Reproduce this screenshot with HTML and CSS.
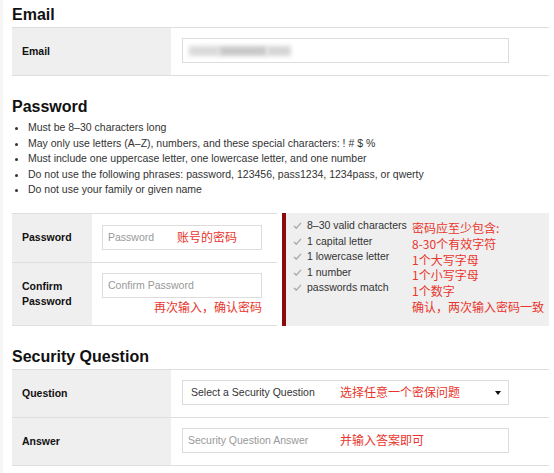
FILE: index.html
```
<!DOCTYPE html>
<html lang="zh-CN">
<head>
  <meta charset="UTF-8">
  <meta name="viewport" content="width=device-width, initial-scale=1.0">
  <title>Account | Email, Password &amp; Security</title>
  <link rel="stylesheet" href="styles.css">
</head>
<body>
  <div class="page">
    <section class="section">
      <h2>Email</h2>
      <div class="form-table">
        <div class="row">
          <div class="label">Email</div>
          <div class="field">
            <div class="input blurred">
              <span class="blur b1"></span><span class="blur b2"></span><span class="blur b3"></span>
            </div>
          </div>
        </div>
      </div>
    </section>

    <section class="section">
      <h2>Password</h2>
      <ul class="rules">
        <li>Must be 8&ndash;30 characters long</li>
        <li>May only use letters (A&ndash;Z), numbers, and these special characters: ! # $ %</li>
        <li>Must include one uppercase letter, one lowercase letter, and one number</li>
        <li>Do not use the following phrases: password, 123456, pass1234, 1234pass, or qwerty</li>
        <li>Do not use your family or given name</li>
      </ul>

      <div class="pw-wrap">
        <div class="form-table narrow">
          <div class="row">
            <div class="label">Password</div>
            <div class="field">
              <div class="box">
                <input type="password" class="input" placeholder="Password">
                <span class="note in-field">账号的密码</span>
              </div>
            </div>
          </div>
          <div class="row">
            <div class="label">Confirm<br>Password</div>
            <div class="field tall">
              <input type="password" class="input" placeholder="Confirm Password">
              <div class="note below">再次输入，确认密码</div>
            </div>
          </div>
        </div>

        <div class="checks">
          <ul class="check-list">
            <li><svg class="tick" viewBox="0 0 10 8"><polyline points="1,4.5 3.6,7 9,1"/></svg>8&ndash;30 valid characters</li>
            <li><svg class="tick" viewBox="0 0 10 8"><polyline points="1,4.5 3.6,7 9,1"/></svg>1 capital letter</li>
            <li><svg class="tick" viewBox="0 0 10 8"><polyline points="1,4.5 3.6,7 9,1"/></svg>1 lowercase letter</li>
            <li><svg class="tick" viewBox="0 0 10 8"><polyline points="1,4.5 3.6,7 9,1"/></svg>1 number</li>
            <li><svg class="tick" viewBox="0 0 10 8"><polyline points="1,4.5 3.6,7 9,1"/></svg>passwords match</li>
          </ul>
          <div class="note notes">
            <div>密码应至少包含:</div>
            <div>8-30个有效字符</div>
            <div>1个大写字母</div>
            <div>1个小写字母</div>
            <div>1个数字</div>
            <div>确认，两次输入密码一致</div>
          </div>
        </div>
      </div>
    </section>

    <section class="section">
      <h2>Security Question</h2>
      <div class="form-table">
        <div class="row">
          <div class="label">Question</div>
          <div class="field">
            <div class="box select-box">
              <select class="input select">
                <option>Select a Security Question</option>
              </select>
              <span class="note in-select">选择任意一个密保问题</span>
            </div>
          </div>
        </div>
        <div class="row">
          <div class="label">Answer</div>
          <div class="field">
            <div class="box">
              <input type="text" class="input" placeholder="Security Question Answer">
              <span class="note in-select">并输入答案即可</span>
            </div>
          </div>
        </div>
      </div>
    </section>
  </div>
</body>
</html>
```

FILE: styles.css
```
body {
  margin: 0;
  background: #f6f6f6;
  font-family: "Liberation Sans", Arial, "Noto Sans CJK SC", sans-serif;
  color: #333;
}
.page {
  margin-left: 3px; width: 537px; min-height: 473px;
  background: #fff; border-right: 1px solid #ececec;
  padding: 5px 6px 0 9px;
}
.section + .section { margin-top: 21px; }
h2 {
  margin: 0 0 2px; font-size: 16px; line-height: 20px;
  color: #111; font-weight: bold;
}

/* label / field rows */
.form-table { border-top: 1px solid #dedede; }
.row { display: flex; border-bottom: 1px solid #dedede; }
.label {
  width: 149px; flex-shrink: 0; background: #efefef;
  padding-left: 10px; display: flex; align-items: center;
  font-size: 10.5px; font-weight: bold; color: #111; line-height: 15px;
}
.field { flex: 1; padding: 10px 0 12px 11px; }
.input {
  display: block; box-sizing: border-box; width: 327px; height: 25px;
  border: 1px solid #dcdcdc; background: #fff; margin: 0;
  font-family: inherit; font-size: 10.5px; color: #333;
  padding: 0 5px; outline: none;
}
.input::placeholder { color: #999; }
.box { position: relative; width: 327px; }

.blurred { position: relative; }
.blur {
  position: absolute; top: 7px; height: 10px; background: #c9c9c9;
  filter: blur(2px);
}
.blur.b1 { left: 6px; width: 30px; background: #dadada; }
.blur.b2 { left: 36px; width: 48px; }
.blur.b3 { left: 84px; width: 24px; background: #d6d6d6; }

/* password rules */
.rules {
  margin: 3px 0 15px; padding-left: 16px;
  font-size: 10.5px; line-height: 15.6px; color: #333;
}

.pw-wrap { display: flex; align-items: stretch; }
.narrow { width: 265px; }
.narrow .label { width: 70px; }
.narrow .field { padding: 11px 0 12px 10px; }
.narrow .input, .narrow .box { width: 160px; }
.narrow .field.tall { padding: 10px 0 10px 10px; }

.note {
  font-family: "Noto Sans CJK SC", sans-serif;
  font-size: 12px; color: #e8362d; white-space: nowrap;
}
.in-field { position: absolute; left: 75px; top: 4px; line-height: 16px; }
.below { width: 160px; text-align: right; margin-top: 1px; line-height: 16px; }
.in-select { position: absolute; left: 158px; top: 4px; line-height: 16px; }

/* live check panel */
.checks {
  display: flex; margin-left: 5px; width: 263px;
  background: #efefef; border-left: 4px solid #8e0a0a;
}
.check-list {
  list-style: none; margin: 0; padding: 5px 0 0 7px; width: 119px;
  font-size: 10.5px; line-height: 15.6px; color: #333;
}
.check-list li { white-space: nowrap; }
.tick {
  width: 9px; height: 7px; margin-right: 5px;
  fill: none; stroke: #aaa; stroke-width: 1.6;
}
.notes { padding-top: 7px; line-height: 15.8px; }

/* select */
.select {
  appearance: none; -webkit-appearance: none;
  padding-left: 8px; color: #333; border-color: #dcdcdc;
}
.select-box::after {
  content: ""; position: absolute; right: 8px; top: 11px;
  border-left: 3px solid transparent; border-right: 3px solid transparent;
  border-top: 4px solid #111;
}
```
